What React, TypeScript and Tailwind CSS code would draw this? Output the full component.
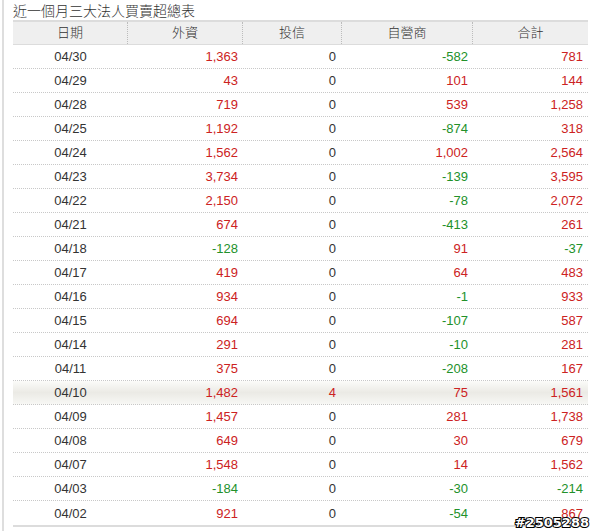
const ROWS: [string, number, number, number, number][] = [
  ["04/30", 1363, 0, -582, 781],
  ["04/29", 43, 0, 101, 144],
  ["04/28", 719, 0, 539, 1258],
  ["04/25", 1192, 0, -874, 318],
  ["04/24", 1562, 0, 1002, 2564],
  ["04/23", 3734, 0, -139, 3595],
  ["04/22", 2150, 0, -78, 2072],
  ["04/21", 674, 0, -413, 261],
  ["04/18", -128, 0, 91, -37],
  ["04/17", 419, 0, 64, 483],
  ["04/16", 934, 0, -1, 933],
  ["04/15", 694, 0, -107, 587],
  ["04/14", 291, 0, -10, 281],
  ["04/11", 375, 0, -208, 167],
  ["04/10", 1482, 4, 75, 1561],
  ["04/09", 1457, 0, 281, 1738],
  ["04/08", 649, 0, 30, 679],
  ["04/07", 1548, 0, 14, 1562],
  ["04/03", -184, 0, -30, -214],
  ["04/02", 921, 0, -54, 867],
];

const HEADERS = ["日期", "外資", "投信", "自營商", "合計"];

function Num({ v }: { v: number }) {
  const color = v > 0 ? "text-[#cc2222]" : v < 0 ? "text-[#22912a]" : "text-[#333]";
  return <div className={`pr-[5px] text-right ${color}`}>{v.toLocaleString("en-US")}</div>;
}

export default function App() {
  return (
    <div
      className="h-[531px] w-[592px] overflow-hidden bg-white"
      style={{ fontFamily: '"Liberation Sans", Arial, "Noto Sans CJK TC", sans-serif' }}
    >
      <div className="relative ml-[2px] h-full border-l-2 border-[#dedede] pl-[9px] pt-[3px]">
        <div className="h-[17px] text-[14px] font-light leading-[17px] text-[#333]">近一個月三大法人買賣超總表</div>

        <div className="w-[575px] border-b-2 border-[#dcdcdc] text-[13px] text-[#333]">
          <div className="grid h-[25px] grid-cols-[115px_115px_99px_131px_115px] items-center border-t-2 border-b border-[#dcdcdc] bg-[#efefef]">
            {HEADERS.map((h, i) => (
              <div
                key={h}
                className={`text-center font-light leading-[22px] ${i < 4 ? "border-r border-dotted border-[#bcbcbc]" : ""}`}
              >
                {h}
              </div>
            ))}
          </div>

          {ROWS.map(([date, foreign, trust, dealer, total], idx) => (
            <div
              key={date}
              className={`grid h-[24px] grid-cols-[115px_115px_99px_131px_115px] items-center leading-[23px] ${
                idx < ROWS.length - 1 ? "border-b border-dotted border-[#c8c8c8]" : ""
              } ${date === "04/10" ? "bg-gradient-to-b from-[#fbfbf9] via-[#ebeae5] to-[#f7f7f4]" : ""}`}
            >
              <div className="text-center">{date}</div>
              <Num v={foreign} />
              <div className={`pr-[6px] text-right ${trust > 0 ? "text-[#cc2222]" : ""}`}>{trust}</div>
              <Num v={dealer} />
              <Num v={total} />
            </div>
          ))}
        </div>

        <div
          className="absolute bottom-[1px] right-[3px] text-[13px] font-bold leading-[14px] text-white"
          style={{
            fontFamily: '"DejaVu Sans", sans-serif',
            WebkitTextStroke: "2px #000",
            paintOrder: "stroke fill",
          }}
        >
          #2505288
        </div>
      </div>
    </div>
  );
}
